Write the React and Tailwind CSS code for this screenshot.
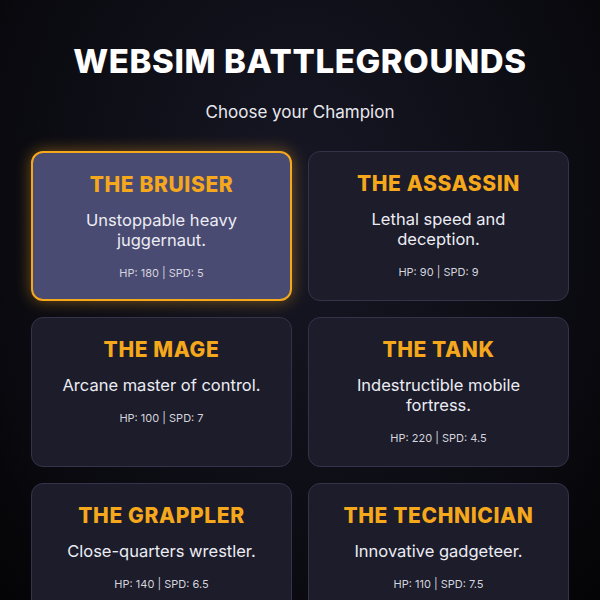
const champions = [
  { name: "THE BRUISER", desc: "Unstoppable heavy juggernaut.", hp: 180, spd: 5, selected: true },
  { name: "THE ASSASSIN", desc: "Lethal speed and deception.", hp: 90, spd: 9 },
  { name: "THE MAGE", desc: "Arcane master of control.", hp: 100, spd: 7 },
  { name: "THE TANK", desc: "Indestructible mobile fortress.", hp: 220, spd: 4.5 },
  { name: "THE GRAPPLER", desc: "Close-quarters wrestler.", hp: 140, spd: 6.5 },
  { name: "THE TECHNICIAN", desc: "Innovative gadgeteer.", hp: 110, spd: 7.5 },
];

const Card = ({ name, desc, hp, spd, selected }) => {
  const look = selected
    ? "bg-[#4a4b72] border-2 border-[#f5a81c] shadow-[0_0_16px_rgba(245,168,28,0.45)]"
    : "bg-[#1c1c2a] border border-[#33334a]";

  return (
    <div className={`${look} h-[150px] rounded-xl flex flex-col items-center text-center px-5 pt-[18px]`}>
      <h3 className="font-extrabold text-[21px] leading-[28px] tracking-[0.6px] text-[#f5a81c]">{name}</h3>
      <p className="mt-[11px] text-[16.5px] leading-[20px] text-[#ececf4]">{desc}</p>
      <p className="mt-[16px] text-[11px] leading-[14px] text-[#d4d4de]">
        HP: {hp} | SPD: {spd}
      </p>
    </div>
  );
};

export default function App() {
  return (
    <div
      className="w-[600px] h-[600px] overflow-hidden bg-[radial-gradient(ellipse_at_50%_35%,#181826_0%,#0d0d15_55%,#040406_100%)] text-white"
      style={{ fontFamily: "Inter, 'Noto Sans', sans-serif" }}
    >
      <div className="flex flex-col items-center pt-[42px]">
        <h1 className="font-extrabold text-[33px] leading-[38px] tracking-[0.6px]">WEBSIM BATTLEGROUNDS</h1>
        <p className="mt-[21px] text-[17px] leading-[22px] text-[#e8e8ee]">Choose your Champion</p>
      </div>
      <div className="grid grid-cols-2 gap-4 px-[31px] mt-[28px]">
        {champions.map((c) => (
          <Card key={c.name} {...c} />
        ))}
      </div>
    </div>
  );
}
